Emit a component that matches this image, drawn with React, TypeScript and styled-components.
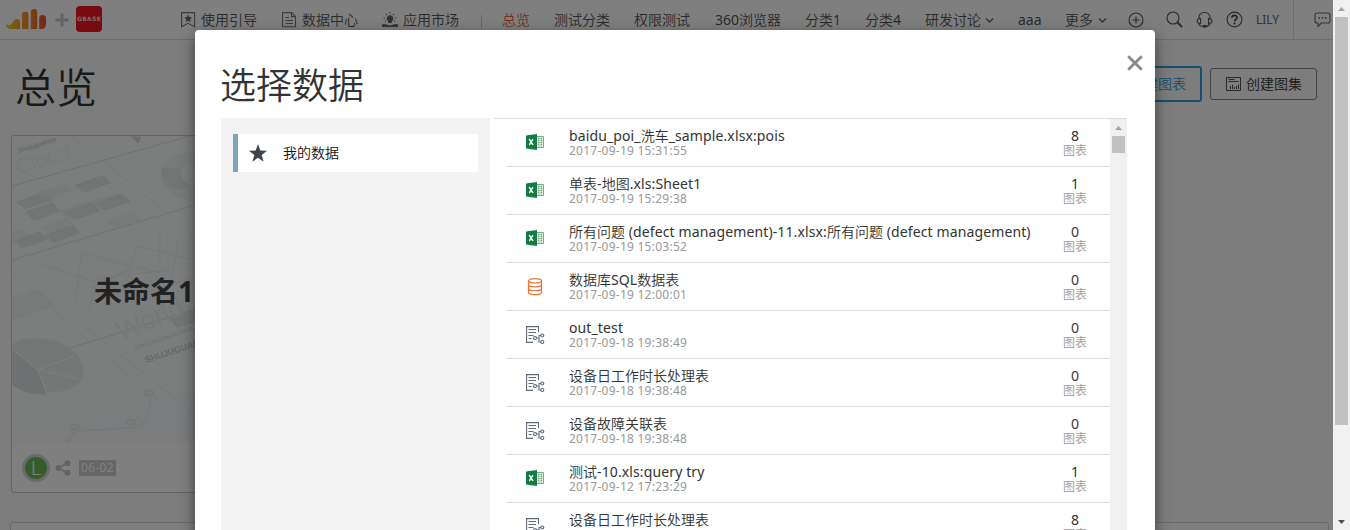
import React from "react";
import styled, { createGlobalStyle } from "styled-components";

const GlobalStyle = createGlobalStyle`
  *, *::before, *::after { box-sizing: border-box; }
  body {
    margin: 0;
    overflow: hidden;
    color: #333;
    font: 350 14px/20px "Noto Sans", "Noto Sans CJK SC", sans-serif;
  }
  h1, h2, h3, p { margin: 0; }
  svg { display: block; flex: none; }
`;

const Screen = styled.div`
  display: flex;
  width: 1350px;
  height: 530px;
  overflow: hidden;
`;

const Viewport = styled.div`
  position: relative;
  flex: 1;
  overflow: hidden;
  background: #fbfbfb;
`;

const Header = styled.header`
  display: flex;
  align-items: center;
  height: 40px;
  background: #fff;
  border-bottom: 1px solid #dcdcdc;
`;

const Brand = styled.div`
  display: flex;
  align-items: center;
  width: 181px;
  padding-left: 6px;
`;

const Partner = styled.div`
  display: flex;
  align-items: center;
  justify-content: center;
  width: 26px;
  height: 26px;
  margin: 0 0 1px 7px;
  border-radius: 4px;
  background: #f01420;
  color: #f6dcdc;
  font: bold 6px/26px "DejaVu Sans", sans-serif;
  letter-spacing: 0.3px;
`;

const NavItem = styled.a<{ $width: number; $gap?: number; $active?: boolean }>`
  display: flex;
  align-items: center;
  flex: none;
  gap: ${(p) => p.$gap ?? 5}px;
  width: ${(p) => p.$width}px;
  height: 39px;
  color: ${(p) => (p.$active ? "#e8623a" : "#555")};
  white-space: nowrap;
`;

const NavDivider = styled.i`
  width: 1px;
  height: 13px;
  margin: 3px 20px 0 0;
  background: #ccc;
`;

const UserName = styled(NavItem)`
  color: #666;
  font-size: 12px;
`;

const ChatCell = styled.div`
  display: flex;
  align-items: center;
  height: 39px;
  padding-left: 20px;
  border-left: 1px solid #dcdcdc;
`;

const TitleBar = styled.div`
  display: flex;
  align-items: center;
  height: 89px;
  padding: 0 16px 0 15px;
`;

const PageTitle = styled.h1`
  flex: 1;
  font-size: 41px;
  font-weight: 350;
  line-height: 60px;
  margin-top: 4px;
`;

const ActionButton = styled.button<{ $primary?: boolean }>`
  display: flex;
  align-items: center;
  gap: 5px;
  height: ${(p) => (p.$primary ? 36 : 32)}px;
  width: ${(p) => (p.$primary ? 111 : 107)}px;
  margin: 0 0 1px 8px;
  padding: 0 0 0 ${(p) => (p.$primary ? 17 : 15)}px;
  border: ${(p) => (p.$primary ? "2px solid #2a9fe0" : "1px solid #888")};
  border-radius: 3px;
  background: none;
  color: ${(p) => (p.$primary ? "#2a9fe0" : "#333")};
  font: inherit;
  white-space: nowrap;
`;

const Card = styled.article`
  position: relative;
  width: 430px;
  height: 358px;
  margin: 6px 0 0 11px;
  border: 1px solid #c8c8c8;
  border-radius: 3px;
  background: #fff;
  overflow: hidden;
`;

const CardName = styled.h2`
  position: absolute;
  left: 82px;
  top: 135px;
  color: #444;
  font-size: 28px;
  line-height: 40px;
`;

const CardFooter = styled.footer`
  display: flex;
  align-items: center;
  height: 50px;
  padding-left: 10px;
`;

const Avatar = styled.span`
  display: flex;
  align-items: center;
  justify-content: center;
  width: 28px;
  height: 28px;
  border: 3px solid #d4d4d4;
  border-radius: 50%;
  background: #6cb856;
  color: #fff;
  font: 300 20px/22px "Noto Sans", sans-serif;
`;

const DateTag = styled.span`
  width: 37px;
  height: 16px;
  margin-left: 8px;
  border-radius: 2px;
  background: #ccc;
  color: #fff;
  font-size: 12px;
  line-height: 16px;
  text-align: center;
`;

const NextCard = styled.div`
  height: 60px;
  margin: 29px 4px 0 10px;
  border: 1px solid #d2d2d2;
  border-radius: 3px;
  background: #fff;
`;

const Backdrop = styled.div`
  position: absolute;
  inset: 0;
  padding: 30px 178px 0 195px;
  background: rgba(0, 0, 0, 0.5);
`;

const Dialog = styled.section`
  display: flex;
  flex-direction: column;
  height: 560px;
  border-radius: 4px;
  background: #fff;
  box-shadow: 0 5px 15px rgba(0, 0, 0, 0.5);
`;

const DialogHeader = styled.div`
  display: flex;
  justify-content: space-between;
  height: 88px;
  padding: 25px 12px 0 25px;
`;

const DialogTitle = styled.h2`
  height: 60px;
  font-size: 36px;
  font-weight: 350;
  line-height: 62px;
`;

const DialogBody = styled.div`
  display: flex;
  flex: 1;
  min-height: 0;
  padding: 0 28px 0 26px;
`;

const Sidebar = styled.nav`
  width: 269px;
  padding: 16px 12px;
  background: #f3f3f3;
`;

const SidebarItem = styled.div`
  display: flex;
  align-items: center;
  height: 38px;
  gap: 15px;
  padding-left: 10px;
  border-left: 5px solid #7da4b8;
  background: #fff;
  color: #111;
`;

const ListPane = styled.div`
  display: flex;
  flex: 1;
  margin-left: 4px;
  border-top: 1px solid #dcdcdc;
`;

const List = styled.ul`
  flex: 1;
  min-width: 0;
  margin: 0 0 0 13px;
  padding: 0;
  list-style: none;
`;

const Row = styled.li`
  display: flex;
  height: 48px;
  padding: 8px 0 0 19px;
  border-bottom: 1px solid #dcdcdc;
`;

const RowIcon = styled.span`
  width: 43px;
  padding-top: 7px;
`;

const RowText = styled.div`
  flex: 1;
  min-width: 0;
  white-space: nowrap;
`;

const RowTitle = styled.p`
  height: 17px;
  line-height: 17px;
`;

const RowMeta = styled.p`
  height: 14px;
  color: #999;
  font-size: 12px;
  line-height: 14px;
`;

const RowCount = styled.div`
  width: 70px;
  text-align: center;
`;

const LatinRun = styled.span<{ $spacing: number }>`
  font-weight: 400;
  letter-spacing: ${(p) => p.$spacing}px;
`;

const Scrollbar = styled.div`
  display: flex;
  flex-direction: column;
  align-items: center;
  width: 17px;
  height: 100%;
  background: #f0f0f0;
`;

const ScrollThumb = styled.i<{ $height: number }>`
  width: 13px;
  height: ${(p) => p.$height}px;
  background: #c1c1c1;
`;

const Spacer = styled.i`
  flex: 1;
`;

/* Latin runs sit at regular weight with their own tracking; Chinese runs stay lighter. */
function Label({ text, spacing = 0 }: { text: string; spacing?: number }) {
  return (
    <>
      {text.split(/([\u4e00-\u9fff]+)/).map((run, i) =>
        i % 2 ? run : run && <LatinRun key={i} $spacing={spacing}>{run}</LatinRun>
      )}
    </>
  );
}

const ScrollArrow = ({ down }: { down?: boolean }) => (
  <svg width="17" height="17" viewBox="0 0 17 17">
    <path d={down ? "M5 7h7l-3.5 4z" : "M5 11h7L8.500 7z"} fill={down ? "#505050" : "#a3a3a3"} />
  </svg>
);

const line = { fill: "none", stroke: "#777", strokeWidth: 1.1 } as const;

const BrandLogo = () => (
  <svg width="42" height="22" viewBox="0 0 42 22">
    <defs>
      <linearGradient id="brand" gradientUnits="userSpaceOnUse" x1="0" x2="41">
        <stop offset="0" stopColor="#e6cc20" />
        <stop offset=".45" stopColor="#f0962a" />
        <stop offset="1" stopColor="#ea4e2c" />
      </linearGradient>
    </defs>
    <path
      fill="url(#brand)"
      d="M0 15c1.500 1.600 4 1.600 6-.6 1.500-2 2.500-4.400 5-4.400 2 0 3 1.500 3 3.500V20H6c-4 0-6-2-6-5zM16 20V6a3.200 3.200 0 0 1 6.400 0v14zM24.800 20V3.200a3.200 3.200 0 0 1 6.400 0V20zM33.200 20V9.500a3.400 3.400 0 0 1 6.800 0V15c0 3-2 5-4 5z"
    />
  </svg>
);

const PlusMark = () => (
  <svg width="14" height="14" viewBox="0 0 14 14">
    <path d="M7 .5v13M.5 7h13" stroke="#c6c6c6" strokeWidth="3" />
  </svg>
);

const BookmarkIcon = () => (
  <svg width="15" height="16" viewBox="0 0 15 16">
    <path {...line} d="M.6.6h13v14.200l-6.500-3.500L.6 14.800z" />
    <path fill="#666" d="M7.200 2.600l1.200 2.500 2.700.3-2 1.900.5 2.700-2.400-1.300-2.400 1.300.5-2.700-2-1.900 2.700-.3z" />
  </svg>
);

const DocumentIcon = () => (
  <svg width="15" height="16" viewBox="0 0 15 16">
    <path {...line} d="M.6.6h8.900l4 4v10.200H.6zM9.500.6v4h4M3.500 5.500H7M3.500 8.500h7.500M3.500 11.500h7.500" />
  </svg>
);

const LampIcon = () => (
  <svg width="16" height="16" viewBox="0 0 16 16">
    <path fill="#666" d="M8 3.300a3.200 3.200 0 0 1 1.800 5.900V11H6.200V9.200A3.200 3.200 0 0 1 8 3.300zM0 12.300h4.500c1 1.300 6 1.300 7 0H16V15H0z" />
    <path {...line} d="M8 0v1.700M3.800 2L5 3M12.200 2L11 3M1.500 6H3M13 6h1.500M3 9.500l1-.7M13 9.500l-1-.7" />
  </svg>
);

const ChevronIcon = () => (
  <svg width="9" height="8" viewBox="0 0 9 8">
    <path d="M1 2.500L4.500 6 8 2.500" fill="none" stroke="#666" strokeWidth="1.500" />
  </svg>
);

const AddIcon = () => (
  <svg width="16" height="16" viewBox="0 0 16 16">
    <path {...line} stroke="#555" d="M8 4.500v7M4.500 8h7M15 8A7 7 0 1 1 1 8a7 7 0 0 1 14 0z" />
  </svg>
);

const SearchIcon = () => (
  <svg width="17" height="17" viewBox="0 0 17 17">
    <circle {...line} stroke="#555" cx="7" cy="7" r="6" />
    <path d="M11.300 11.300L16 16" stroke="#555" strokeWidth="2" />
  </svg>
);

const HeadsetIcon = () => (
  <svg width="17" height="17" viewBox="0 0 17 17">
    <path {...line} stroke="#555" d="M2.800 7.500C3 3 5 1.500 8.500 1.500S14 3 14.200 7.500M4.500 7.500v5C-.2 13 .2 7.500 4.500 7.500zM12.500 7.500v5c4.700.5 4.300-5 0-5zM2.500 12c.5 2.500 2 3.500 5 3.500M14 12c-.5 2-1.500 3-4 3.500" />
    <rect x="6.800" y="14" width="3.800" height="2.600" rx="1" fill="#4c4c4c" />
  </svg>
);

const HelpIcon = () => (
  <svg width="17" height="17" viewBox="0 0 17 17">
    <circle {...line} stroke="#555" cx="8.500" cy="8.500" r="7.400" />
    <path d="M6 6.800c0-3.200 5-3.200 5-.2 0 1.800-2.400 1.800-2.400 3.800" fill="none" stroke="#4c4c4c" strokeWidth="1.800" />
    <circle cx="8.500" cy="12.600" r="1.100" fill="#4c4c4c" />
  </svg>
);

const ChatIcon = () => (
  <svg width="17" height="16" viewBox="0 0 17 16">
    <path {...line} stroke="#666" d="M3 1h11q2 0 2 2v6q0 2-2 2H7.500L4 14.500V11H3q-2 0-2-2V3q0-2 2-2z" />
    <path d="M4.500 5.200H6v1.500H4.500zM7.800 5.200h1.500v1.500H7.800zM11 5.200h1.500v1.500H11z" fill="#555" />
  </svg>
);

const ChartSetIcon = () => (
  <svg width="15" height="14" viewBox="0 0 15 14">
    <path fill="none" stroke="#555" d="M.5.5h14v13H.5zM2.500 2.500h6M2.500 4.500h10M4.500 12V9M6.500 12V7.500M8.500 12v-2M10.500 12V9M12.500 12V7.500" />
  </svg>
);

const ShareIcon = () => (
  <svg width="16" height="16" viewBox="0 0 16 16">
    <path d="M13 3L3 8l10 5" fill="none" stroke="#c6c6c6" strokeWidth="1.800" />
    <g fill="#c6c6c6">
      <circle cx="3.500" cy="8" r="3" />
      <circle cx="12.500" cy="3.200" r="3" />
      <circle cx="12.500" cy="12.800" r="3" />
    </g>
  </svg>
);

const CloseIcon = () => (
  <svg width="16" height="16" viewBox="0 0 16 16">
    <path d="M1.200 1.200l13.600 13.600M14.800 1.200L1.200 14.800" stroke="#888" strokeWidth="2.800" />
  </svg>
);

const StarIcon = () => (
  <svg width="20" height="18" viewBox="0 0 20 18">
    <path fill="#40454a" d="M10 0l2.300 6.600 6.700.1-5.300 4.200 1.900 6.800L10 13.800l-5.600 3.900 1.900-6.800L1 6.700l6.700-.1z" />
  </svg>
);

const ExcelIcon = () => (
  <svg width="18" height="16" viewBox="0 0 18 16">
    <path fill="#fff" stroke="#75ad87" d="M10 2.500h7.500v11H10z" />
    <path stroke="#75ad87" strokeDasharray="1.500 .5" strokeWidth="1.800" d="M12.700 3.500v9M15.400 3.500v9" />
    <path fill="#107c41" d="M0 1.500L11 0v16L0 14.500z" />
    <path d="M3.300 5.200L7 11M7 5.200L3.300 11" stroke="#fff" strokeWidth="1.500" />
  </svg>
);

const DatabaseIcon = () => (
  <svg width="18" height="18" viewBox="0 .5 18 18">
    <g fill="none" stroke="#e8743a" strokeWidth="1.200">
      <ellipse cx="9" cy="3.300" rx="6.500" ry="2.200" />
      <path d="M2.500 3.300v11.400c0 3.100 13 3.100 13 0V3.300M2.500 7.100c0 3 13 3 13 0M2.500 11c0 3 13 3 13 0" />
    </g>
  </svg>
);

const FlowIcon = () => (
  <svg width="19" height="18" viewBox="0 0 19 18">
    <g fill="none" stroke="#5d6b7a" strokeWidth="1.100">
      <path d="M12.500 6V.6H.6v15.800H7M2.500 3.500h7.500M2.500 6.500h7.500M2.500 9.500h5M2.500 12.500h3M10.500 12h2.500M14.800 9.500H13v6.500h1.800" />
      <circle cx="9" cy="12" r="1.500" />
      <circle cx="16.300" cy="9.500" r="1.500" />
      <circle cx="16.300" cy="16" r="1.500" />
    </g>
  </svg>
);

const CoverArt = () => (
  <svg width="428" height="307" viewBox="0 0 428 307">
    <rect width="428" height="307" fill="#f8fcfc" />
    <path d="M0 307l428-130v130z" fill="#f6f8fa" />
    <g fill="none" stroke="#ebefef">
      <path d="M0 50L220-12M0 124L220 58M0 230L220 162" stroke="#dfe3e3" />
      <path d="M60 0l160 130M0 138l150 130M75 192l140 112" />
      <path d="M30 128l95 32 60-20M63 165l7-48 92 24M77 174l10-32 70-8M112 155l13-45 60 15M120 132l-42 20M148 93v36M166 106l-6 34" />
      <path d="M55 307l8-12 53-3c20 0 22-14 22-34" strokeWidth="1.500" />
      <g strokeWidth="2">
        <ellipse cx="63" cy="291" rx="4" ry="2.500" />
        <ellipse cx="119" cy="286" rx="4" ry="2.500" />
        <ellipse cx="137" cy="257" rx="4" ry="2.500" />
      </g>
    </g>
    <g fill="#f1f5f5">
      <path d="M25 56l27-8 10 7-27 8zM45 75l27-9 10 8-27 8zM71 68l27-9 9 8-26 8zM93 85l27-9 9 8-26 8zM28 91l27-9 9 8-27 8zM0 95l8-2 10 8-18 5z" />
      <path d="M0 162l25-9 20 17-45 14z" />
      <path d="M190 15c-28 0-43 11-41 28 4 14 20 23 41 23V52c-12-2-20-7-21-14 0-9 8-12 21-12z" />
    </g>
    <g fill="#e6eaea">
      <path d="M62 49l29-10 8 8-27 10zM4 66l28-10 9 8-28 9zM13 76l27-10 9 9-27 10zM2 105l25-10 9 8-26 10zM33 98l27-9 8 8-27 10zM53 76l27-10 9 9-27 9zM83 67l27-10 9 9-27 9z" />
      <path d="M149 32l20 1c-1 9 4 14 10 17l-12 4c-12-3-18-12-18-22zM156 181l29-9v14l-20 6z" />
      <path d="M119 0l10 1-3 7z" fill="#d5d9d9" />
    </g>
    <path fill="#eaeced" d="M0 208c22-12 58-3 68 15 14 28-18 38-48 31L0 247z" />
    <path fill="#dfe1e3" d="M0 213l26 21 10 24C20 261 0 252 0 247z" />
    <path d="M0 213l26 21 10 26M26 234l36-14M26 234l44 9" stroke="#f6f9f9" fill="none" strokeWidth="1.500" />
    <g fontFamily="Liberation Sans, sans-serif">
      <text transform="translate(6 39) rotate(-17)" fontSize="22" fill="#f0f4f4">Cloud</text>
      <text transform="translate(6 17) rotate(-17)" fontSize="7" fill="#c5c9c9">Shujuguanjia</text>
      <text transform="translate(109 205) rotate(-23)" fontSize="27" fill="#edf1f2">World</text>
      <text transform="translate(134 227) rotate(-18)" fontSize="9" fontWeight="bold" fill="#cdd2d2">SHUJUGUANJIA</text>
      <text transform="translate(123 214) rotate(-19)" fontSize="6" fill="#d8dddd">SHUJUGUANJIA DATA</text>
    </g>
  </svg>
);

type Source = "excel" | "database" | "flow";

const sourceIcon: Record<Source, React.ReactNode> = {
  excel: <ExcelIcon />,
  database: <DatabaseIcon />,
  flow: <FlowIcon />,
};

const rows: { source: Source; title: string; time: string; charts: number }[] = [
  { source: "excel", title: "baidu_poi_洗车_sample.xlsx:pois", time: "2017-09-19 15:31:55", charts: 8 },
  { source: "excel", title: "单表-地图.xls:Sheet1", time: "2017-09-19 15:29:38", charts: 1 },
  { source: "excel", title: "所有问题 (defect management)-11.xlsx:所有问题 (defect management)", time: "2017-09-19 15:03:52", charts: 0 },
  { source: "database", title: "数据库SQL数据表", time: "2017-09-19 12:00:01", charts: 0 },
  { source: "flow", title: "out_test", time: "2017-09-18 19:38:49", charts: 0 },
  { source: "flow", title: "设备日工作时长处理表", time: "2017-09-18 19:38:48", charts: 0 },
  { source: "flow", title: "设备故障关联表", time: "2017-09-18 19:38:48", charts: 0 },
  { source: "excel", title: "测试-10.xls:query try", time: "2017-09-12 17:23:29", charts: 1 },
  { source: "flow", title: "设备日工作时长处理表", time: "2017-09-12 17:20:05", charts: 8 },
];

export default function App() {
  return (
    <>
      <GlobalStyle />
      <Screen>
        <Viewport>
          <Header>
            <Brand>
              <BrandLogo />
              <NavItem as="span" $width={21} $gap={0}>
                <Spacer />
                <PlusMark />
              </NavItem>
              <Partner>GBASE</Partner>
            </Brand>
            <NavItem $width={101}><BookmarkIcon />使用引导</NavItem>
            <NavItem $width={100}><DocumentIcon />数据中心</NavItem>
            <NavItem $width={99}><LampIcon />应用市场</NavItem>
            <NavDivider />
            <NavItem $width={52} $active>总览</NavItem>
            <NavItem $width={80}>测试分类</NavItem>
            <NavItem $width={81}>权限测试</NavItem>
            <NavItem $width={90} $gap={0}><Label text="360浏览器" /></NavItem>
            <NavItem $width={60} $gap={0}><Label text="分类1" /></NavItem>
            <NavItem $width={60} $gap={0}><Label text="分类4" /></NavItem>
            <NavItem $width={93} $gap={4}>研发讨论<ChevronIcon /></NavItem>
            <NavItem $width={47}><Label text="aaa" /></NavItem>
            <NavItem $width={63}>更多<ChevronIcon /></NavItem>
            <NavItem $width={38}><AddIcon /></NavItem>
            <NavItem $width={30}><SearchIcon /></NavItem>
            <NavItem $width={30}><HeadsetIcon /></NavItem>
            <NavItem $width={30}><HelpIcon /></NavItem>
            <UserName $width={37}><Label text="LILY" /></UserName>
            <ChatCell><ChatIcon /></ChatCell>
          </Header>

          <TitleBar>
            <PageTitle>总览</PageTitle>
            <ActionButton $primary><ChartSetIcon />创建图表</ActionButton>
            <ActionButton><ChartSetIcon />创建图集</ActionButton>
          </TitleBar>

          <Card>
            <CoverArt />
            <CardName>未命名1</CardName>
            <CardFooter>
              <Avatar>L</Avatar>
              <NavItem as="span" $width={21} $gap={0}>
                <Spacer />
                <ShareIcon />
              </NavItem>
              <DateTag><Label text="06-02" spacing={0.3} /></DateTag>
            </CardFooter>
          </Card>
          <NextCard />

          <Backdrop>
            <Dialog>
              <DialogHeader>
                <DialogTitle>选择数据</DialogTitle>
                <CloseIcon />
              </DialogHeader>
              <DialogBody>
                <Sidebar>
                  <SidebarItem><StarIcon />我的数据</SidebarItem>
                </Sidebar>
                <ListPane>
                  <List>
                    {rows.map((row, i) => (
                      <Row key={i}>
                        <RowIcon>{sourceIcon[row.source]}</RowIcon>
                        <RowText>
                          <RowTitle><Label text={row.title} spacing={0.12} /></RowTitle>
                          <RowMeta><Label text={row.time} spacing={0.25} /></RowMeta>
                        </RowText>
                        <RowCount>
                          <RowTitle><Label text={String(row.charts)} /></RowTitle>
                          <RowMeta>图表</RowMeta>
                        </RowCount>
                      </Row>
                    ))}
                  </List>
                  <Scrollbar>
                    <ScrollArrow />
                    <ScrollThumb $height={17} />
                  </Scrollbar>
                </ListPane>
              </DialogBody>
            </Dialog>
          </Backdrop>
        </Viewport>

        <Scrollbar>
          <ScrollArrow />
          <ScrollThumb $height={408} />
          <Spacer />
          <ScrollArrow down />
        </Scrollbar>
      </Screen>
    </>
  );
}
